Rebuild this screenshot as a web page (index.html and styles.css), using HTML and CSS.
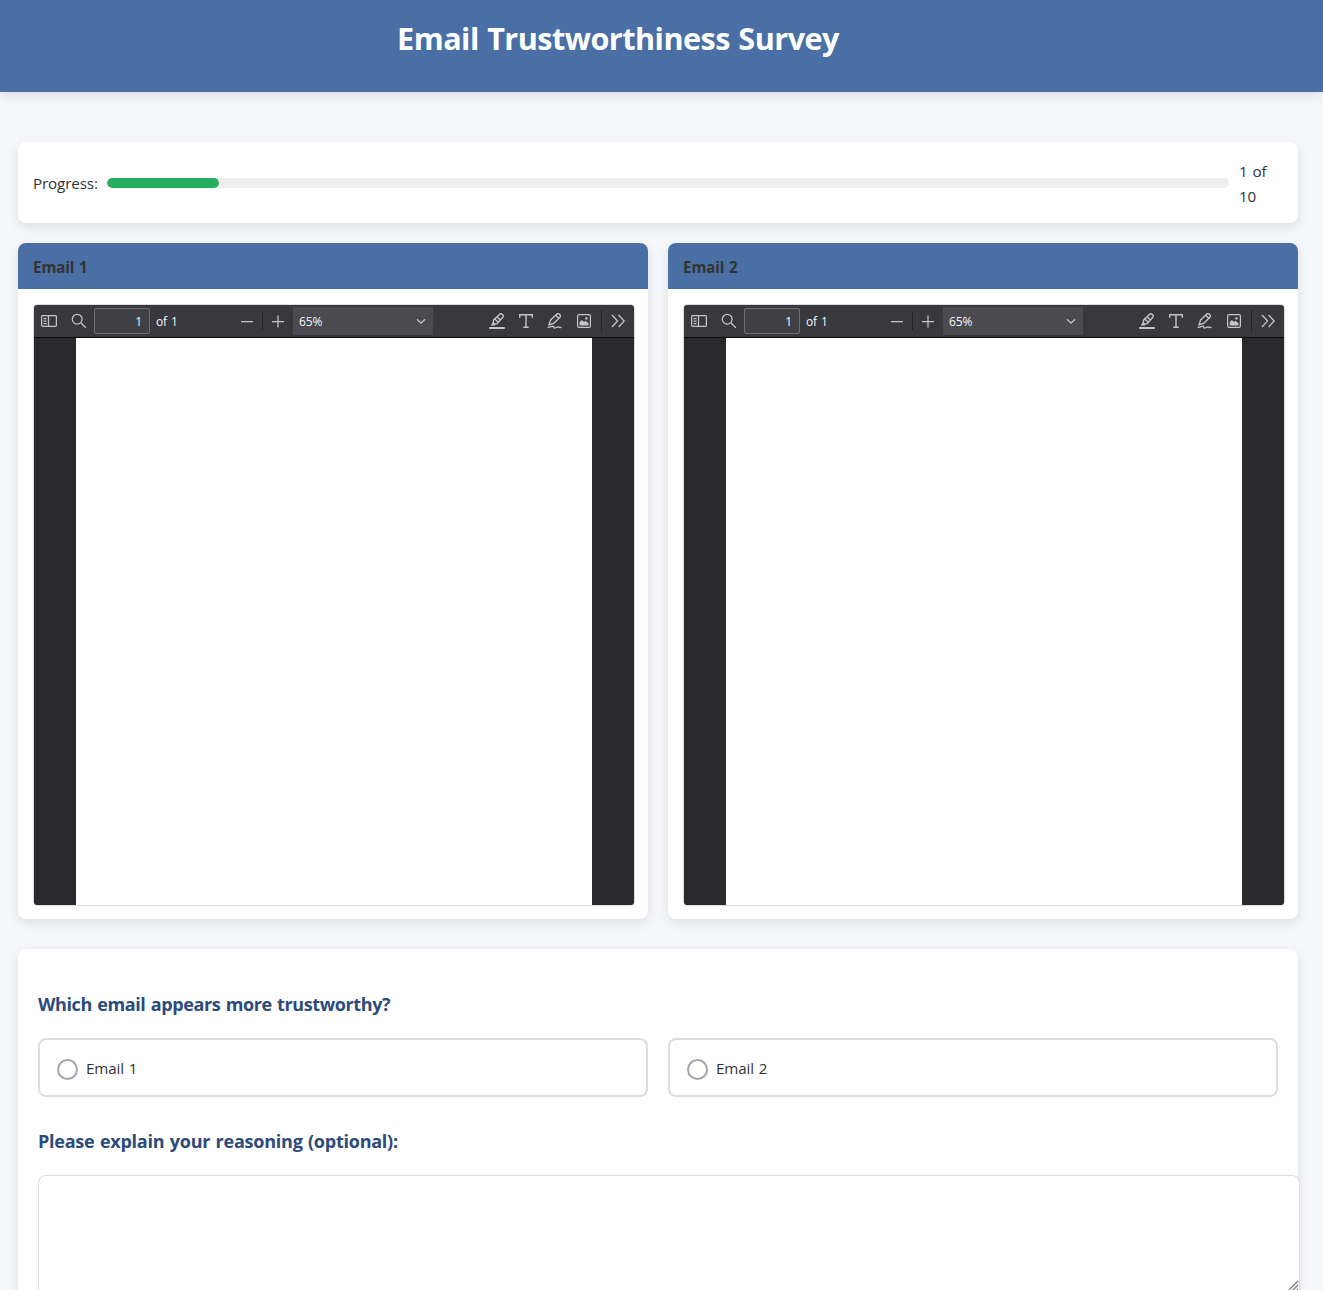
FILE: index.html
```html
<!DOCTYPE html>
<html lang="en">
<head>
<meta charset="utf-8">
<title>Email Trustworthiness Survey</title>
<link rel="stylesheet" href="styles.css">
</head>
<body>
<svg width="0" height="0" class="sprite" aria-hidden="true">
  <symbol id="sidebar" viewBox="0 0 16 16"><rect x=".6" y="2.6" width="14.8" height="10.8" rx="1.2"/><path d="M7.5 2.6v10.8M2.5 5.5h3M2.5 8h3M2.5 10.5h3"/></symbol>
  <symbol id="search" viewBox="0 0 16 16"><circle cx="6.2" cy="6.2" r="4.9"/><path d="M9.8 9.8l5 5"/></symbol>
  <symbol id="minus" viewBox="0 0 16 16"><path d="M2 8.5h12"/></symbol>
  <symbol id="plus" viewBox="0 0 16 16"><path d="M2 8.5h12M8 2.5v12"/></symbol>
  <symbol id="chevron" viewBox="0 0 16 16"><path d="M4 6.2l4 4 4-4"/></symbol>
  <symbol id="highlight" viewBox="0 0 16 16"><path d="M.2 15h15.6" stroke-width="1.9"/><path d="M4.6 7L10.7 1.2q1.2-1 2.3 0l.8.8q1 1.1 0 2.3L8.2 10.6 5.4 11 4.2 9.8zM8 3.8l3.3 3.3M5.8 5.9l3.4 3.4" stroke-width="1.4"/><path class="solid" d="M3.9 9.2l2.6 2.6-1 .8H1.6z"/></symbol>
  <symbol id="text" viewBox="0 0 16 16"><path d="M1.7 4.8V1.7h12.6v3.1M8 1.7v12.6M5.3 14.3h5.4" stroke-width="1.4"/></symbol>
  <symbol id="draw" viewBox="0 0 16 16"><path d="M3.6 6.9L9.8.9q1.1-.9 2.2.1l1 1q1 1.1 0 2.2L6.9 10.2 2 11.9zM8.6 2.2l3.1 3.1M.6 14.3c2.5.5 4.3-1.6 5.8-.9 1 .6-.2 1.7 1.1 1.7 1.4 0 2.3-1.6 3.8-1.1.8.5 1.7.7 3.2.4" stroke-width="1.35"/></symbol>
  <symbol id="image" viewBox="0 0 16 16"><rect x="1.6" y="1.6" width="12.8" height="12.8" rx="1.5"/><path class="solid" d="M3.6 12.4V9.3L5.8 7l2.4 2 1.4-1.3 2.8 2.6v2.1zM9.3 4.3h2.2v2.2H9.3z"/></symbol>
  <symbol id="more" viewBox="0 0 16 16"><path d="M2 2L7.6 8 2 14M8.6 2l5.6 6-5.6 6"/></symbol>
</svg>
<header class="site-header"><h1>Email Trustworthiness Survey</h1></header>
<main class="container">
  <section class="card progress">
    <span class="progress-label">Progress:</span>
    <div class="track"><div class="fill" style="width:10%"></div></div>
    <span class="count">1 of 10</span>
  </section>
  <section class="emails">
    <article class="card email">
      <div class="email-head">Email 1</div>
      <div class="viewer">
        <div class="toolbar">
          <svg class="icon i-side"><use href="#sidebar"/></svg><svg class="icon i-search"><use href="#search"/></svg>
          <span class="page-no">1</span><span class="pages">of 1</span>
          <svg class="icon i-minus"><use href="#minus"/></svg><i class="sep"></i><svg class="icon i-plus"><use href="#plus"/></svg>
          <span class="zoom"><span>65%</span><svg class="icon"><use href="#chevron"/></svg></span>
          <div class="tools"><svg class="icon"><use href="#highlight"/></svg><svg class="icon"><use href="#text"/></svg><svg class="icon"><use href="#draw"/></svg><svg class="icon"><use href="#image"/></svg></div>
          <i class="sep tall"></i><svg class="icon i-more"><use href="#more"/></svg>
        </div>
        <div class="canvas"><div class="sheet"></div></div>
      </div>
    </article>
    <article class="card email">
      <div class="email-head">Email 2</div>
      <div class="viewer">
        <div class="toolbar">
          <svg class="icon i-side"><use href="#sidebar"/></svg><svg class="icon i-search"><use href="#search"/></svg>
          <span class="page-no">1</span><span class="pages">of 1</span>
          <svg class="icon i-minus"><use href="#minus"/></svg><i class="sep"></i><svg class="icon i-plus"><use href="#plus"/></svg>
          <span class="zoom"><span>65%</span><svg class="icon"><use href="#chevron"/></svg></span>
          <div class="tools"><svg class="icon"><use href="#highlight"/></svg><svg class="icon"><use href="#text"/></svg><svg class="icon"><use href="#draw"/></svg><svg class="icon"><use href="#image"/></svg></div>
          <i class="sep tall"></i><svg class="icon i-more"><use href="#more"/></svg>
        </div>
        <div class="canvas"><div class="sheet"></div></div>
      </div>
    </article>
  </section>
  <form class="card form">
    <h3 class="q1">Which email appears more trustworthy?</h3>
    <div class="options">
      <label class="option"><input type="radio" name="choice"><span>Email 1</span></label>
      <label class="option"><input type="radio" name="choice"><span>Email 2</span></label>
    </div>
    <h3 class="q2">Please explain your reasoning (optional):</h3>
    <div class="answer">
      <textarea aria-label="Reasoning"></textarea>
      <svg class="grip" width="12" height="12" viewBox="0 0 12 12"><path d="M1 11L11 1M5 11l6-6M9 11l2-2"/></svg>
    </div>
  </form>
</main>
</body>
</html>
```
FILE: styles.css
```css
* { box-sizing: border-box; }
body {
  margin: 0;
  height: 1290px;
  overflow: hidden;
  display: flex;
  flex-direction: column;
  background: #f5f7fb;
  color: #333;
  font: 15.2px/25.6px "Segoe UI", "Open Sans", sans-serif;
  letter-spacing: -0.12px;
  word-spacing: 1px;
}
.sprite { position: absolute; }
.site-header {
  flex: none;
  height: 92px;
  padding: 13px 87px 0 0;
  background: #4a6fa5;
  color: #fff;
  text-align: center;
  box-shadow: 0 4px 12px rgba(0, 0, 0, .1);
}
h1 { margin: 0; font-size: 30.6px; line-height: 51px; letter-spacing: -0.52px; white-space: nowrap; }
.container { flex: none; width: 1280px; height: 1148px; margin: 50px 0 0 18px; }
.card { background: #fff; border-radius: 8px; box-shadow: 0 4px 12px rgba(0, 0, 0, .1); }
.progress { display: flex; align-items: center; height: 81px; padding: 15px; }
.progress-label { width: 74px; padding-top: 2px; white-space: nowrap; }
.track { width: 1122px; height: 10px; border-radius: 5px; background: #eee; overflow: hidden; }
.fill { height: 100%; border-radius: 5px; background: #27ae60; }
.count { width: 44px; margin-left: 10px; padding: 2px 10px 0 0; line-height: 25px; }
.emails { display: grid; grid-template-columns: 1fr 1fr; gap: 20px; margin: 20px 0 30px; }
.email { height: 676px; overflow: hidden; }
.email-head { height: 46px; padding: 12px 15px; line-height: 25px; font-weight: 700; background: #4a6fa5; }
.viewer {
  width: 602px;
  height: 602px;
  margin: 15px 0 0 15px;
  border: 1px solid #ddd;
  border-radius: 4px;
  overflow: hidden;
}
.toolbar {
  display: flex;
  align-items: center;
  height: 33px;
  background: #38383d;
  border-bottom: 1px solid #0c0c0d;
  color: #f9f9fa;
  font-size: 12px;
  line-height: 16px;
}
.icon { flex: none; width: 16px; height: 16px; fill: none; stroke: #c6c6c9; stroke-width: 1.25; }
.solid { fill: #c6c6c9; stroke: none; }
.i-side { margin-left: 7px; }
.i-search { margin-left: 14px; }
.page-no {
  width: 56px;
  height: 26px;
  margin-left: 7px;
  padding: 5px 7px 3px;
  border: 1px solid #6f6f73;
  border-radius: 2px;
  background: #404045;
  text-align: right;
}
.pages { width: 89px; padding: 1px 0 0 6px; }
.sep { flex: none; width: 1px; height: 18px; margin-left: 7px; background: #232327; }
.i-plus { margin-left: 7px; }
.zoom {
  display: flex;
  align-items: center;
  justify-content: space-between;
  width: 140px;
  height: 28px;
  margin-left: 7px;
  padding: 0 4px 0 6px;
  background: #4a4a4f;
}
.zoom span { padding-top: 2px; }
.tools { display: flex; gap: 13px; margin-left: 56px; }
.tall { height: 22px; margin-left: 9px; }
.i-more { margin-left: 8px; }
.canvas { height: 567px; padding: 0 42px; background: #2a2a2e; }
.sheet { height: 100%; background: #fff; }
.form { height: 341px; padding: 0 20px; border-radius: 8px 8px 0 0; }
h3 { margin: 0; font-size: 18px; line-height: 30px; color: #2c4a7c; white-space: nowrap; }
.q1 { padding: 40px 0 19px; letter-spacing: -0.38px; }
.q2 { padding: 29px 0 19px; letter-spacing: -0.24px; }
.options { display: grid; grid-template-columns: 1fr 1fr; gap: 20px; }
.option {
  display: flex;
  align-items: center;
  height: 59px;
  padding: 2px 17px 0;
  border: 2px solid #ddd;
  border-radius: 8px;
}
.option input {
  appearance: none;
  width: 21px;
  height: 21px;
  margin: 2px 8px 0 0;
  border: 2px solid #a3a3af;
  border-radius: 50%;
}
.answer { position: relative; width: 1262px; height: 115px; overflow: hidden; }
textarea {
  display: block;
  width: 100%;
  height: 100%;
  border: 1px solid #ddd;
  border-bottom: 0;
  border-radius: 8px 8px 0 0;
  background: #fff;
  resize: none;
}
.grip { position: absolute; right: 1px; top: 105px; fill: none; stroke: #777; stroke-width: 1.2; }
```
